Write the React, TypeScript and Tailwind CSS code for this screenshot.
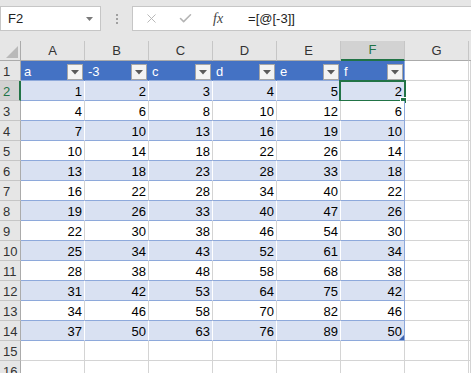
import { X, Check } from "lucide-react";

const cols = ["A", "B", "C", "D", "E", "F", "G"];
const headers = ["a", "-3", "c", "d", "e", "f"];
const data = [
  [1, 2, 3, 4, 5, 2],
  [4, 6, 8, 10, 12, 6],
  [7, 10, 13, 16, 19, 10],
  [10, 14, 18, 22, 26, 14],
  [13, 18, 23, 28, 33, 18],
  [16, 22, 28, 34, 40, 22],
  [19, 26, 33, 40, 47, 26],
  [22, 30, 38, 46, 54, 30],
  [25, 34, 43, 52, 61, 34],
  [28, 38, 48, 58, 68, 38],
  [31, 42, 53, 64, 75, 42],
  [34, 46, 58, 70, 82, 46],
  [37, 50, 63, 76, 89, 50],
];

function FilterButton() {
  return (
    <div className="absolute right-[1px] bottom-0 w-[16px] h-[16px] bg-[#f3f3f3] border border-[#a6a6a6] flex items-center justify-center">
      <svg width="8" height="5" viewBox="0 0 8 5">
        <path d="M0 0 L8 0 L4 4.5 Z" fill="#5a5a5a" />
      </svg>
    </div>
  );
}

function TableCell({ row, col }: { row: number; col: number }) {
  const last = col === 5;
  if (row === 1) {
    return (
      <div
        className={`relative w-[64px] h-full bg-[#4472c4] text-white border-b border-b-[#8ea9db] pl-[3px] leading-[20px] pt-[1px] ${
          last ? "border-r border-r-[#8ea9db]" : "border-r border-r-[#4472c4]"
        }`}
      >
        {headers[col]}
        <FilterButton />
      </div>
    );
  }
  const banded = row % 2 === 0;
  const value = data[row - 2][col];
  const selected = row === 2 && col === 5;
  return (
    <div
      className={`relative w-[64px] h-full text-right pr-[2px] leading-[20px] pt-[1px] border-b border-b-[#8ea9db] border-r ${
        banded ? "bg-[#d9e1f2]" : "bg-white"
      } ${last ? "border-r-[#8ea9db]" : banded ? "border-r-white" : "border-r-[#d4d4d4]"}`}
    >
      {value}
      {selected && (
        <div className="absolute -left-[2px] -top-[1px] w-[67px] h-[22px] border-2 border-[#217346]">
          <div className="absolute -right-[3px] -bottom-[4px] w-[7px] h-[7px] bg-[#217346] border border-white" />
        </div>
      )}
      {row === 14 && last && (
        <svg className="absolute right-0 bottom-0" width="5" height="5" viewBox="0 0 5 5">
          <path d="M5 0 L5 5 L0 5 Z" fill="#3d63b0" />
        </svg>
      )}
    </div>
  );
}

function PlainCell({ grow }: { grow?: boolean }) {
  return (
    <div
      className={`h-full bg-white border-r border-b border-[#d4d4d4] ${grow ? "flex-1" : "w-[64px]"}`}
    />
  );
}

export default function App() {
  const rows = Array.from({ length: 16 }, (_, i) => i + 1);

  return (
    <div className="w-[471px] h-[373px] overflow-hidden bg-white font-['Liberation_Sans',Arial,sans-serif] text-[13px] text-black">
      {/* formula bar */}
      <div className="h-[41px] bg-[#e6e6e6] flex items-start pt-[6px]">
        <div className="w-[101px] h-[25px] bg-white border border-[#c6c6c6] flex items-center justify-between pl-[7px] pr-[7px]">
          <span className="text-[#222]">F2</span>
          <svg width="7" height="4" viewBox="0 0 7 4">
            <path d="M0 0 L7 0 L3.5 4 Z" fill="#7a7a7a" />
          </svg>
        </div>
        <div className="w-[31px] h-[25px] flex flex-col items-center justify-center gap-[2px]">
          <span className="w-[2px] h-[2px] bg-[#a0a0a0]" />
          <span className="w-[2px] h-[2px] bg-[#a0a0a0]" />
          <span className="w-[2px] h-[2px] bg-[#a0a0a0]" />
        </div>
        <div className="flex-1 h-[25px] bg-white border border-r-0 border-[#c6c6c6] flex items-center">
          <X className="ml-[11px] w-[15px] h-[15px] text-[#b4b4b4]" strokeWidth={1.5} />
          <Check className="ml-[19px] w-[15px] h-[15px] text-[#b4b4b4]" strokeWidth={2.5} />
          <span className="ml-[20px] font-['Liberation_Serif',serif] italic text-[14px] text-[#444]">fx</span>
          <span className="ml-[25px] text-[#222]">=[@[-3]]</span>
        </div>
      </div>

      {/* column headers */}
      <div className="flex h-[20px] bg-[#e6e6e6] text-[#333]">
        <div className="relative w-[21px] h-full border-r border-b border-[#ababab]">
          <svg className="absolute right-[2px] bottom-[2px]" width="12" height="12" viewBox="0 0 12 12">
            <path d="M12 0 L12 12 L0 12 Z" fill="#b9b9b9" />
          </svg>
        </div>
        {cols.map((c) => (
          <div
            key={c}
            className={`w-[64px] h-full border-r border-r-[#c6c6c6] flex items-center justify-center ${
              c === "F"
                ? "bg-[#d2d2d2] text-[#217346] border-b-2 border-b-[#217346]"
                : "border-b border-b-[#ababab]"
            }`}
          >
            {c}
          </div>
        ))}
        <div className="flex-1 h-full border-b border-[#ababab]" />
      </div>

      {/* rows */}
      {rows.map((r) => (
        <div key={r} className="flex h-[20px]">
          <div
            className={`w-[21px] h-full pl-[3px] leading-[20px] pt-[1px] border-b border-b-[#c6c6c6] ${
              r === 2
                ? "bg-[#d2d2d2] text-[#217346] border-r-2 border-r-[#217346]"
                : "bg-[#e6e6e6] text-[#333] border-r border-r-[#ababab]"
            }`}
          >
            {r}
          </div>
          {r <= 14
            ? [0, 1, 2, 3, 4, 5].map((c) => <TableCell key={c} row={r} col={c} />)
            : [0, 1, 2, 3, 4, 5].map((c) => <PlainCell key={c} />)}
          <PlainCell />
          <PlainCell grow />
        </div>
      ))}
    </div>
  );
}
